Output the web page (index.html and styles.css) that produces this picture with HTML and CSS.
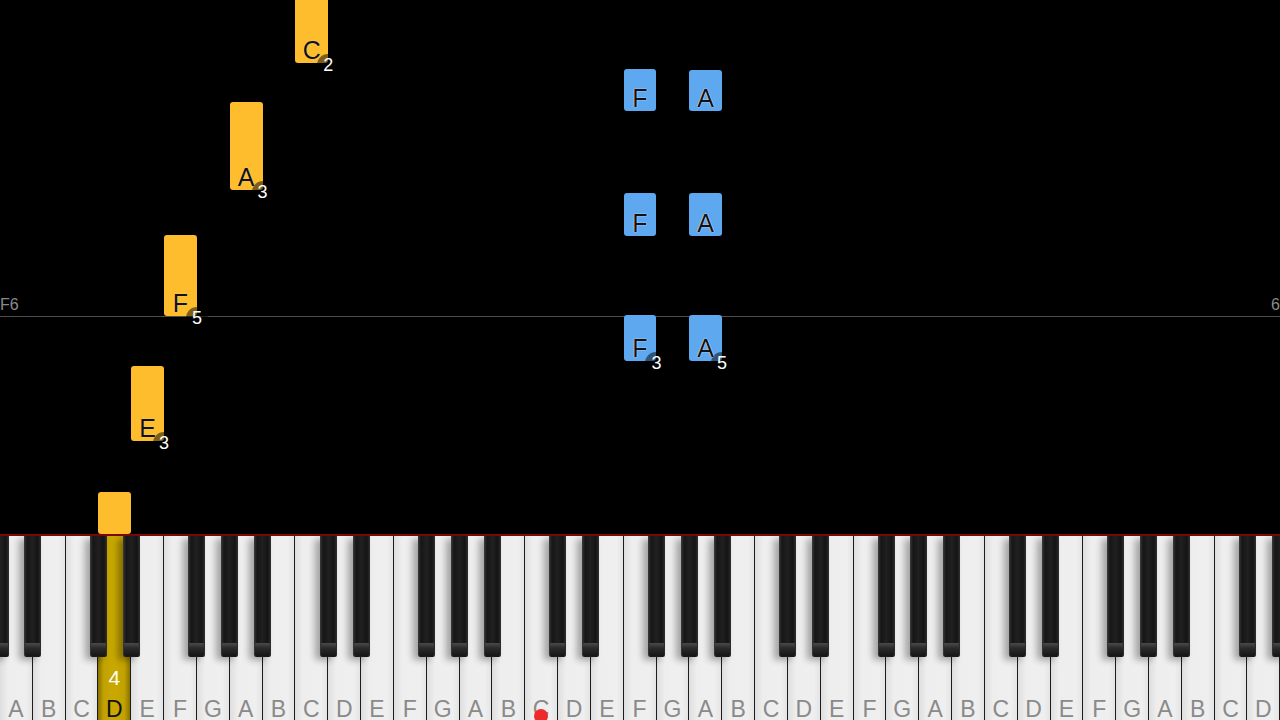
FILE: index.html
```html
<!DOCTYPE html>
<html>
<head>
<meta charset="utf-8">
<title>Piano roll</title>
<link rel="stylesheet" href="styles.css">
</head>
<body>
<div class="app">
  <div class="roll">
    <div class="guide"><span class="guide-label">F6</span><span class="guide-label">6</span></div>

    <div class="note yellow" style="--k:3;top:492px;height:42px"></div>
    <div class="note yellow" style="--k:4;top:366px;height:75px"><span class="name">E</span><span class="finger">3</span></div>
    <div class="note yellow" style="--k:5;top:235px;height:81px"><span class="name">F</span><span class="finger">5</span></div>
    <div class="note yellow" style="--k:7;top:102px;height:88px"><span class="name">A</span><span class="finger">3</span></div>
    <div class="note yellow" style="--k:9;top:-10px;height:73px"><span class="name">C</span><span class="finger">2</span></div>

    <div class="note blue" style="--k:19;top:69px;height:42px"><span class="name">F</span></div>
    <div class="note blue" style="--k:21;top:70px;height:41px"><span class="name">A</span></div>
    <div class="note blue" style="--k:19;top:193px;height:43px"><span class="name">F</span></div>
    <div class="note blue" style="--k:21;top:193px;height:43px"><span class="name">A</span></div>
    <div class="note blue" style="--k:19;top:315px;height:46px"><span class="name">F</span><span class="finger">3</span></div>
    <div class="note blue" style="--k:21;top:315px;height:46px"><span class="name">A</span><span class="finger">5</span></div>
  </div>

  <div class="keyboard">
    <div class="whites">
      <div class="wkey"><span class="klabel">A</span></div>
      <div class="wkey"><span class="klabel">B</span></div>
      <div class="wkey"><span class="klabel">C</span></div>
      <div class="wkey active"><span class="kfinger">4</span><span class="klabel">D</span></div>
      <div class="wkey"><span class="klabel">E</span></div>
      <div class="wkey"><span class="klabel">F</span></div>
      <div class="wkey"><span class="klabel">G</span></div>
      <div class="wkey"><span class="klabel">A</span></div>
      <div class="wkey"><span class="klabel">B</span></div>
      <div class="wkey"><span class="klabel">C</span></div>
      <div class="wkey"><span class="klabel">D</span></div>
      <div class="wkey"><span class="klabel">E</span></div>
      <div class="wkey"><span class="klabel">F</span></div>
      <div class="wkey"><span class="klabel">G</span></div>
      <div class="wkey"><span class="klabel">A</span></div>
      <div class="wkey"><span class="klabel">B</span></div>
      <div class="wkey"><span class="klabel">C</span><span class="dot"></span></div>
      <div class="wkey"><span class="klabel">D</span></div>
      <div class="wkey"><span class="klabel">E</span></div>
      <div class="wkey"><span class="klabel">F</span></div>
      <div class="wkey"><span class="klabel">G</span></div>
      <div class="wkey"><span class="klabel">A</span></div>
      <div class="wkey"><span class="klabel">B</span></div>
      <div class="wkey"><span class="klabel">C</span></div>
      <div class="wkey"><span class="klabel">D</span></div>
      <div class="wkey"><span class="klabel">E</span></div>
      <div class="wkey"><span class="klabel">F</span></div>
      <div class="wkey"><span class="klabel">G</span></div>
      <div class="wkey"><span class="klabel">A</span></div>
      <div class="wkey"><span class="klabel">B</span></div>
      <div class="wkey"><span class="klabel">C</span></div>
      <div class="wkey"><span class="klabel">D</span></div>
      <div class="wkey"><span class="klabel">E</span></div>
      <div class="wkey"><span class="klabel">F</span></div>
      <div class="wkey"><span class="klabel">G</span></div>
      <div class="wkey"><span class="klabel">A</span></div>
      <div class="wkey"><span class="klabel">B</span></div>
      <div class="wkey"><span class="klabel">C</span></div>
      <div class="wkey"><span class="klabel">D</span></div>
    </div>
    <div class="bkey" style="--b:0"></div>
    <div class="bkey" style="--b:1"></div>
    <div class="bkey" style="--b:3"></div>
    <div class="bkey" style="--b:4"></div>
    <div class="bkey" style="--b:6"></div>
    <div class="bkey" style="--b:7"></div>
    <div class="bkey" style="--b:8"></div>
    <div class="bkey" style="--b:10"></div>
    <div class="bkey" style="--b:11"></div>
    <div class="bkey" style="--b:13"></div>
    <div class="bkey" style="--b:14"></div>
    <div class="bkey" style="--b:15"></div>
    <div class="bkey" style="--b:17"></div>
    <div class="bkey" style="--b:18"></div>
    <div class="bkey" style="--b:20"></div>
    <div class="bkey" style="--b:21"></div>
    <div class="bkey" style="--b:22"></div>
    <div class="bkey" style="--b:24"></div>
    <div class="bkey" style="--b:25"></div>
    <div class="bkey" style="--b:27"></div>
    <div class="bkey" style="--b:28"></div>
    <div class="bkey" style="--b:29"></div>
    <div class="bkey" style="--b:31"></div>
    <div class="bkey" style="--b:32"></div>
    <div class="bkey" style="--b:34"></div>
    <div class="bkey" style="--b:35"></div>
    <div class="bkey" style="--b:36"></div>
    <div class="bkey" style="--b:38"></div>
    <div class="bkey" style="--b:39"></div>
  </div>
</div>
</body>
</html>
```

FILE: styles.css
```css
* { box-sizing: border-box; }

html, body {
  margin: 0;
  padding: 0;
  background: #000;
  overflow: hidden;
}

body {
  font-family: "Liberation Sans", Arial, sans-serif;
}

.app {
  width: 1280px;
  height: 720px;
  display: flex;
  flex-direction: column;
  background: #000;
  overflow: hidden;
}

/* ---------- falling notes ---------- */
.roll {
  position: relative;
  height: 534px;
  flex: none;
}

.guide {
  position: absolute;
  left: 0;
  right: 0;
  top: 297px;
  height: 20px;
  border-bottom: 1px solid #4c4c4c;
  display: flex;
  justify-content: space-between;
  align-items: flex-end;
}

.guide-label {
  color: #8a8a8a;
  font-size: 16px;
  line-height: 16px;
  padding-bottom: 3px;
}

.note {
  position: absolute;
  left: calc(var(--k) * 1280px / 39);
  width: calc(1280px / 39);
  border-radius: 3px;
}

.note.yellow { background: #fdbd2c; }
.note.blue { background: #5ea8ef; }

.note .name {
  position: absolute;
  left: 0;
  right: 0;
  bottom: 0;
  text-align: center;
  font-size: 25px;
  line-height: 25px;
  color: #111;
  text-shadow: 0 0 1px rgba(255, 255, 255, 0.7);
  z-index: 2;
}

.note.blue .name {
  text-shadow: 0 0 1px #fff, 0 0 1px #fff;
}

.note .finger {
  position: absolute;
  right: -11px;
  bottom: -13px;
  width: 22px;
  height: 22px;
  border-radius: 50%;
  background: rgba(0, 0, 0, 0.5);
  color: #fff;
  font-size: 18px;
  line-height: 22px;
  text-align: center;
  z-index: 1;
}

/* ---------- keyboard ---------- */
.keyboard {
  position: relative;
  flex: 1;
  border-top: 2px solid #7c0808;
}

.whites {
  display: flex;
  height: 100%;
}

.wkey {
  flex: 1;
  height: 100%;
  display: flex;
  flex-direction: column;
  align-items: center;
  justify-content: flex-end;
  position: relative;
  background: linear-gradient(to right, #dedede 0%, #eeeeee 25%, #efefef 80%, #e4e4e4 100%);
  border-right: 1.5px solid #1c1c1c;
}

.klabel {
  font-size: 23px;
  line-height: 23px;
  color: #8a8a8a;
  margin-bottom: -1px;
  position: relative;
  z-index: 1;
}

.wkey.active {
  background: linear-gradient(to right, #8a7300 0%, #c2a200 18%, #c9a900 50%, #c2a200 82%, #8a7300 100%);
}

.wkey.active .klabel {
  color: #111;
}

.kfinger {
  color: #fff;
  font-size: 21px;
  line-height: 21px;
  margin-bottom: 10px;
}

.dot {
  position: absolute;
  left: 50%;
  bottom: -3px;
  width: 14px;
  height: 14px;
  margin-left: -7px;
  border-radius: 50%;
  background: #ee2a2a;
  z-index: 2;
}

.bkey {
  position: absolute;
  top: 0;
  left: calc(var(--b) * 1280px / 39 - 8.5px);
  width: 17px;
  height: 121px;
  border-radius: 0 0 2px 2px;
  background: linear-gradient(to right, #3a3a3a 0%, #161616 18%, #202020 50%, #141414 82%, #303030 100%);
  box-shadow: -5px 3px 7px rgba(0, 0, 0, 0.32);
  z-index: 3;
}

.bkey::after {
  content: "";
  position: absolute;
  left: 1px;
  right: 1px;
  bottom: 1px;
  height: 13px;
  border-radius: 1px 1px 2px 2px;
  background: linear-gradient(to bottom, #4a4a4a 0%, #2a2a2a 40%, #161616 100%);
}
```
